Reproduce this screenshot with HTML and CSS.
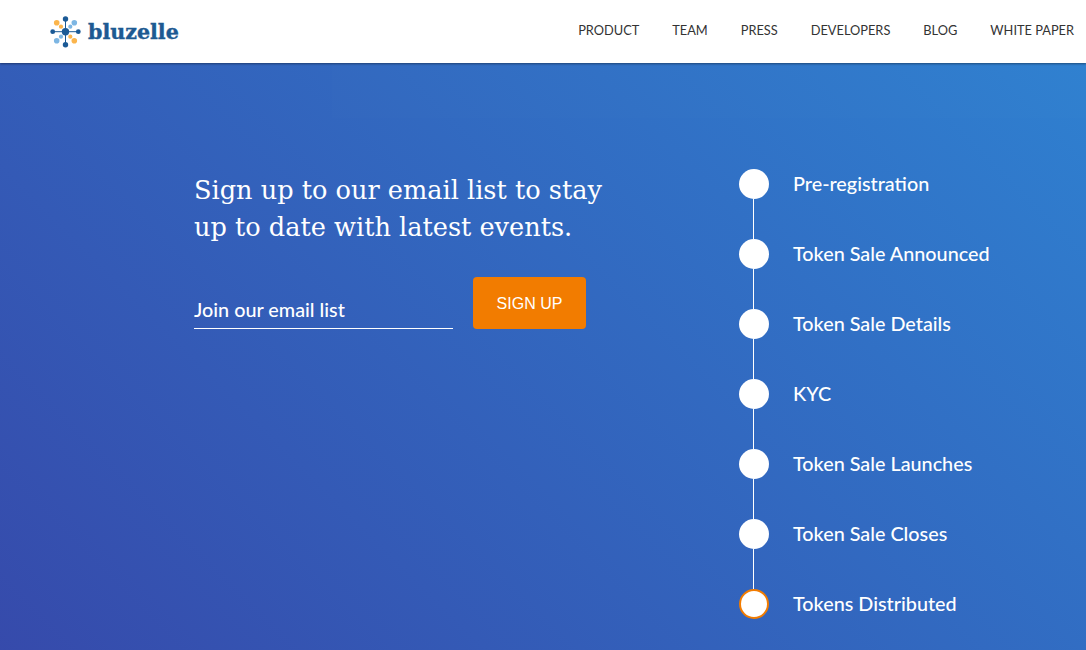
FILE: index.html
```html
<!DOCTYPE html>
<html lang="en">
<head>
    <meta charset="UTF-8">
    <meta name="viewport" content="width=device-width, initial-scale=1.0">
    <title>Bluzelle</title>
    <link rel="stylesheet" href="styles.css">
</head>
<body>
    <header class="header">
        <a class="logo" href="#">
            <svg class="logo-mark" width="32" height="32" viewBox="0 0 32 32">
                <g stroke="#1b5a96" stroke-width="1">
                    <line x1="15.500" y1="3" x2="15.500" y2="29"/>
                    <line x1="3" y1="15.700" x2="28" y2="15.700"/>
                </g>
                <circle cx="15.500" cy="15.700" r="3.700" fill="#1b5a96"/>
                <circle cx="15.500" cy="3" r="2.700" fill="#1b5a96"/>
                <circle cx="15.500" cy="28.700" r="2.700" fill="#1b5a96"/>
                <circle cx="2.700" cy="15.700" r="2.400" fill="#1b5a96"/>
                <circle cx="28.300" cy="15.700" r="2.400" fill="#1b5a96"/>
                <circle cx="6.700" cy="6.700" r="2.800" fill="#fbb54c"/>
                <circle cx="11" cy="10.700" r="2.100" fill="#fbb54c"/>
                <circle cx="20.300" cy="20.700" r="2.100" fill="#fbb54c"/>
                <circle cx="24.300" cy="24.700" r="2.800" fill="#fbb54c"/>
                <circle cx="24.300" cy="6.700" r="2.800" fill="#7db6e3"/>
                <circle cx="20.300" cy="10.700" r="2.100" fill="#7db6e3"/>
                <circle cx="11" cy="20.700" r="2.100" fill="#7db6e3"/>
                <circle cx="6.700" cy="24.700" r="2.800" fill="#7db6e3"/>
            </svg>
            <span class="logo-text">bluzelle</span>
        </a>
        <nav class="nav">
            <a href="#">PRODUCT</a>
            <a href="#">TEAM</a>
            <a href="#">PRESS</a>
            <a href="#">DEVELOPERS</a>
            <a href="#">BLOG</a>
            <a href="#">WHITE PAPER</a>
        </nav>
    </header>

    <main class="hero">
        <section class="signup">
            <h2>Sign up to our email list to stay up to date with latest events.</h2>
            <form class="signup-form">
                <input class="email-input" type="text" placeholder="Join our email list">
                <button class="signup-button" type="button">SIGN UP</button>
            </form>
        </section>

        <ul class="timeline">
            <li>Pre-registration</li>
            <li>Token Sale Announced</li>
            <li>Token Sale Details</li>
            <li>KYC</li>
            <li>Token Sale Launches</li>
            <li>Token Sale Closes</li>
            <li class="current">Tokens Distributed</li>
        </ul>
    </main>
</body>
</html>
```

FILE: styles.css
```css
/* Basic Reset */
*, *::before, *::after {
    margin: 0;
    padding: 0;
    box-sizing: border-box;
}

html, body {
    height: 100%;
    overflow: hidden;
}

body {
    font-family: 'Lato', sans-serif;
    display: flex;
    flex-direction: column;
}

a {
    text-decoration: none;
}

.header {
    height: 63px;
    flex-shrink: 0;
    background-color: #ffffff;
    display: flex;
    justify-content: space-between;
    align-items: center;
    padding: 0 12px 3px 50px;
    box-shadow: 0 1px 2px rgba(0, 0, 0, 0.4);
    position: relative;
    z-index: 1;
}

.logo {
    display: flex;
    align-items: center;
    gap: 6px;
    margin-top: 4px;
}

.logo-mark {
    filter: blur(0.3px);
}

.logo-text {
    font-family: 'DejaVu Serif', serif;
    font-weight: 700;
    font-size: 20.600px;
    color: #1d5a92;
    -webkit-text-stroke: 0.4px #1d5a92;
}

.nav {
    display: flex;
    gap: 33px;
}

.nav a {
    font-size: 12.800px;
    color: #333333;
}

.hero {
    flex: 1;
    background: linear-gradient(45deg, #364aab 0%, #2f80d0 100%);
    display: flex;
    padding: 104px 0 0 194px;
    position: relative;
}

/* faint lighter band under the header */
.hero::before {
    content: '';
    position: absolute;
    top: 0;
    left: 332px;
    right: 0;
    height: 55px;
    background-color: rgba(255, 255, 255, 0.008);
}

.signup {
    width: 545px;
}

.signup h2 {
    width: 420px;
    font-family: 'DejaVu Serif', serif;
    font-weight: 400;
    font-size: 25.600px;
    line-height: 37px;
    color: #ffffff;
    margin-top: 5px;
}

.signup-form {
    display: flex;
    align-items: flex-start;
    gap: 20px;
    margin-top: 31px;
}

.email-input {
    width: 259px;
    height: 40px;
    margin-top: 12px;
    background: transparent;
    border: none;
    border-bottom: 1px solid #ffffff;
    outline: none;
    font-family: 'Lato', sans-serif;
    font-size: 19.800px;
    font-weight: 500;
    color: #ffffff;
}

.email-input::placeholder {
    color: #ffffff;
    opacity: 1;
}

.signup-button {
    width: 113px;
    height: 52px;
    padding-top: 1px;
    background-color: #f27c00;
    color: #ffffff;
    border: none;
    border-radius: 4px;
    font-family: 'Liberation Sans', sans-serif;
    font-size: 16px;
    cursor: pointer;
}

.timeline {
    list-style: none;
    margin-top: 2px;
}

.timeline li {
    position: relative;
    height: 70px;
    padding-left: 54px;
    line-height: 28px;
    font-size: 19.800px;
    font-weight: 500;
    color: #ffffff;
}

/* circle */
.timeline li::before {
    content: '';
    position: absolute;
    left: 0;
    top: 0;
    width: 30px;
    height: 30px;
    border-radius: 50%;
    background-color: #ffffff;
}

/* connecting line */
.timeline li::after {
    content: '';
    position: absolute;
    left: 14px;
    top: 30px;
    width: 1px;
    height: 40px;
    background-color: #ffffff;
}

.timeline li:last-child::after {
    display: none;
}

.timeline li.current::before {
    border: 2px solid #f27c00;
}
```
